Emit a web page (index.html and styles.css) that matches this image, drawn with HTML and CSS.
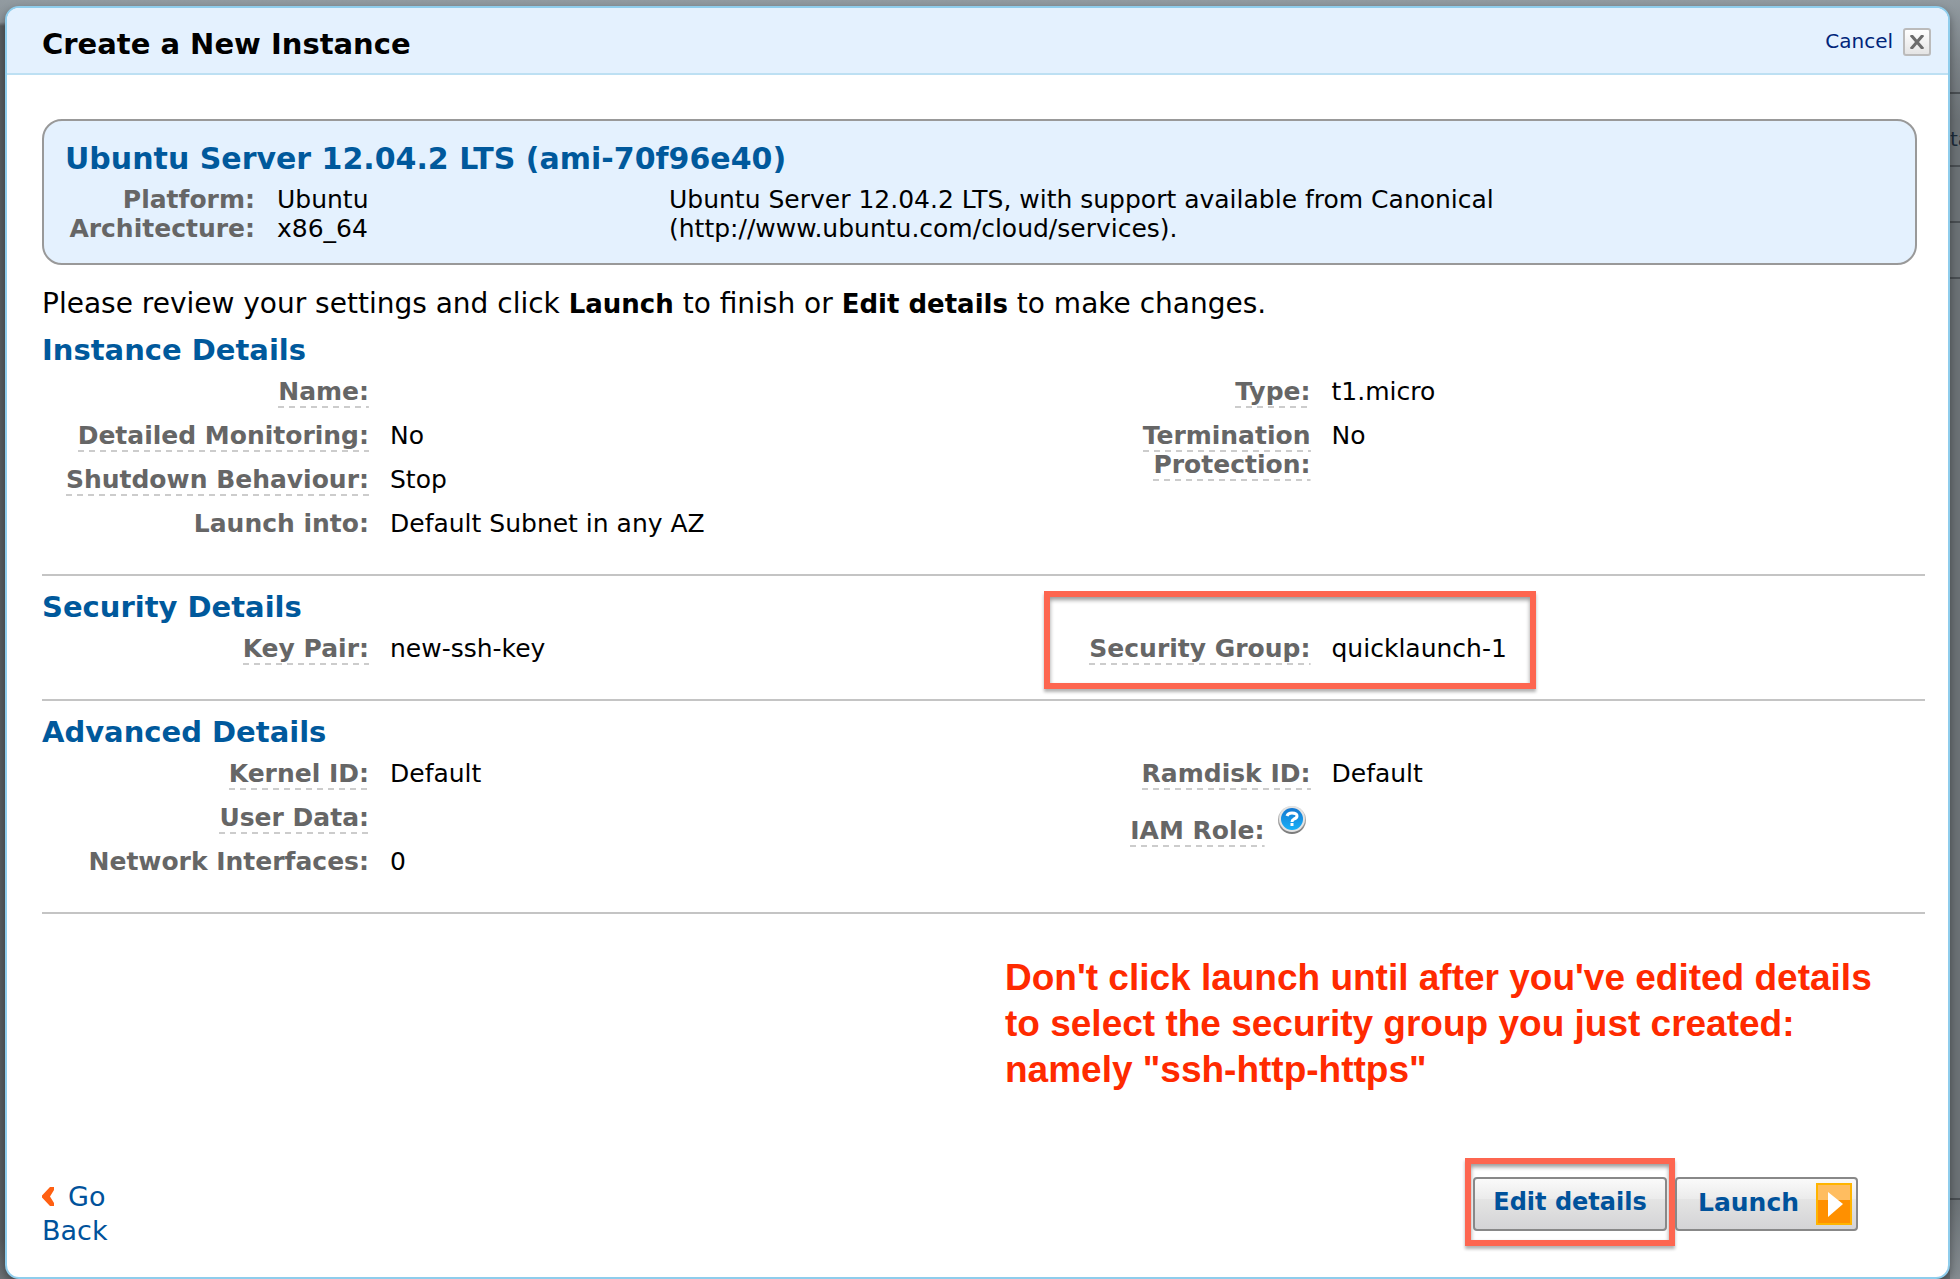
FILE: index.html
```html
<!DOCTYPE html>
<html lang="en">
<head>
<meta charset="utf-8">
<title>Create a New Instance</title>
<link rel="stylesheet" href="styles.css">
</head>
<body>
<span class="page-behind">ta</span>
<main class="dialog">
  <header class="dialog-header">
    <h1 class="dialog-title">Create a New Instance</h1>
    <button class="cancel" type="button">Cancel
      <span class="close-box"><svg width="14" height="14" viewBox="0 0 14 14"><path d="M1 0L13 14M13 0L1 14" stroke="#6b6b6b" stroke-width="3" fill="none"/></svg></span>
    </button>
  </header>
  <div class="dialog-body">
    <section class="ami">
      <h2 class="heading ami-name">Ubuntu Server 12.04.2 LTS (ami-70f96e40)</h2>
      <div class="ami-columns">
        <dl class="ami-facts">
          <dt>Platform:</dt><dd>Ubuntu</dd>
          <dt>Architecture:</dt><dd>x86_64</dd>
        </dl>
        <p class="ami-text">Ubuntu Server 12.04.2 LTS, with support available from Canonical (http://www.ubuntu.com/cloud/services).</p>
      </div>
    </section>
    <p class="intro">Please review your settings and click <b>Launch</b> to finish or <b>Edit details</b> to make changes.</p>

    <section class="group">
      <h2 class="heading">Instance Details</h2>
      <div class="columns">
        <dl class="facts">
          <dt><span class="tip">Name:</span></dt><dd></dd>
          <dt><span class="tip">Detailed Monitoring:</span></dt><dd>No</dd>
          <dt><span class="tip">Shutdown Behaviour:</span></dt><dd>Stop</dd>
          <dt>Launch into:</dt><dd>Default Subnet in any AZ</dd>
        </dl>
        <dl class="facts">
          <dt><span class="tip">Type:</span></dt><dd>t1.micro</dd>
          <dt><span class="tip">Termination Protection:</span></dt><dd>No</dd>
        </dl>
      </div>
    </section>

    <section class="group">
      <h2 class="heading">Security Details</h2>
      <div class="columns">
        <dl class="facts">
          <dt><span class="tip">Key Pair:</span></dt><dd>new-ssh-key</dd>
        </dl>
        <dl class="facts marked">
          <dt><span class="tip">Security Group:</span></dt><dd>quicklaunch-1</dd>
        </dl>
      </div>
    </section>

    <section class="group">
      <h2 class="heading">Advanced Details</h2>
      <div class="columns">
        <dl class="facts">
          <dt><span class="tip">Kernel ID:</span></dt><dd>Default</dd>
          <dt><span class="tip">User Data:</span></dt><dd></dd>
          <dt>Network Interfaces:</dt><dd>0</dd>
        </dl>
        <dl class="facts">
          <dt><span class="tip">Ramdisk ID:</span></dt><dd>Default</dd>
          <dt class="with-help"><span class="tip">IAM Role:</span>
            <svg class="help" width="30" height="30" viewBox="0 0 30 30" role="img" aria-label="Help">
              <defs>
                <linearGradient id="rim" x1="0" y1="0" x2="0" y2="1"><stop offset="0" stop-color="#d8d8d8"/><stop offset="1" stop-color="#777"/></linearGradient>
                <linearGradient id="ball" x1="0" y1="0" x2="0" y2="1"><stop offset="0" stop-color="#1577cf"/><stop offset="1" stop-color="#17b0f8"/></linearGradient>
              </defs>
              <circle cx="15" cy="15" r="14" fill="url(#rim)"/>
              <circle cx="15" cy="14" r="13" fill="#e4e4e4"/>
              <circle cx="15" cy="14" r="11" fill="url(#ball)"/>
              <path d="M10 11Q11 8 15 8Q20 8 20 11Q20 13 17 14Q15 15 15 17M15 18V21" stroke="#fff" stroke-width="3" fill="none"/>
            </svg>
          </dt><dd></dd>
        </dl>
      </div>
    </section>

    <p class="note">Don't click launch until after you've edited details to select the security group you just created: <br>namely "ssh-http-https"</p>

    <footer class="actions">
      <a class="back" href="#"><svg class="chevron" width="12" height="19" viewBox="0 0 12 19"><path d="M8 0H12V3L8 9.500L12 16V19H8L0 10.500V8.500Z" fill="#ff6012"/></svg>Go Back</a>
      <div class="buttons">
        <span class="mark"><button class="button" type="button"><span class="button-text">Edit details</span></button></span>
        <button class="button launch" type="button"><span class="button-text">Launch</span>
          <svg width="36" height="42" viewBox="0 0 36 42"><path d="M0 0H36V42H0Z" fill="#ffb400"/><path d="M2 2H34V17H2Z" fill="#ffbd60"/><path d="M2 17H34V40H2Z" fill="#ff9000"/><path d="M12 9L27 21L12 34Z" fill="#fff"/></svg>
        </button>
      </div>
    </footer>
  </div>
</main>
</body>
</html>
```
FILE: styles.css
```css
*, *::after { box-sizing: border-box; }
body {
  margin: 0;
  min-height: 100vh;
  display: flex;
  position: relative;
  padding: 6px 10px 0 5px;
  background:
    linear-gradient(#4a4f53, #4a4f53) right 92px / 10px 2px no-repeat,
    linear-gradient(#4a4f53, #4a4f53) right 165px / 10px 2px no-repeat,
    linear-gradient(#4a4f53, #4a4f53) right 221px / 10px 2px no-repeat,
    linear-gradient(#4a4f53, #4a4f53) right 277px / 10px 2px no-repeat,
    linear-gradient(#4a4f53, #4a4f53) right 1198px / 10px 2px no-repeat,
    linear-gradient(#929ba1, #7c8388 60px, #6c7276 120px, #6c7276 1200px, #858c91) right / 10px 100% no-repeat,
    linear-gradient(#929ba1, #8a9398 22px, #5a5f62 26px, #5a5f62 1240px, #6c7276);
  font: 25px/29px "DejaVu Sans", Verdana, sans-serif;
  color: #000;
}
h1, h2, p, dl, dd { margin: 0; }
/* Sliver of the page that the dialog covers */
.page-behind {
  position: absolute;
  left: calc(100% - 10px);
  top: 125px;
  width: 10px;
  overflow: hidden;
  font-size: 20px;
  color: #1c2b3a;
}
.dialog {
  position: relative;
  flex: 1;
  display: flex;
  flex-direction: column;
  background: #fff;
  border: 2px solid #8fcdec;
  border-radius: 14px;
  box-shadow: 0 4px 10px rgba(0, 0, 0, .4);
}
.dialog-header {
  display: flex;
  justify-content: space-between;
  align-items: center;
  height: 67px;
  padding: 2px 17px 0 35px;
  background: #e4f1fe;
  border-bottom: 2px solid #bde0f3;
  border-radius: 12px 12px 0 0;
}
.dialog-title { padding-top: 4px; font-size: 29px; line-height: 36px; }
.cancel {
  display: flex;
  align-items: center;
  gap: 10px;
  padding: 0;
  border: 0;
  background: none;
  font: inherit;
  font-size: 20px;
  color: #00257a;
}
.close-box {
  display: flex;
  align-items: center;
  justify-content: center;
  width: 28px;
  height: 28px;
  border: 2px solid #bbb;
  border-radius: 3px;
  background: linear-gradient(#fff, #e4e4e4);
}
.dialog-body {
  flex: 1;
  display: flex;
  flex-direction: column;
  padding: 44px 23px 0 35px;
}
.ami {
  margin-right: 8px;
  padding: 20px 21px;
  background: #e4f1fe;
  border: 2px solid #999;
  border-radius: 20px;
}
.heading { font-size: 29px; line-height: 36px; color: #00599c; }
.ami-name { font-size: 30px; }
.ami-columns { display: flex; padding-top: 8px; }
.ami-facts {
  display: grid;
  grid-template-columns: 190px 1fr;
  column-gap: 22px;
  align-content: start;
  width: 604px;
}
dt { font-weight: bold; color: #666; text-align: right; }
.ami-text { width: 880px; }
.intro { margin-top: 24px; font-size: 28px; }
.intro b { font-size: 26px; }
.group { padding: 13px 0 21px; border-bottom: 2px solid #c4c4c4; }
.columns { display: grid; grid-template-columns: 1fr 1fr; padding-top: 9px; }
.facts {
  display: grid;
  grid-template-columns: 327px 1fr;
  column-gap: 21px;
  align-content: start;
}
.facts dt, .facts dd { margin-bottom: 15px; }
.tip {
  padding-bottom: 2px;
  background: repeating-linear-gradient(90deg, #ccc 0 6px, transparent 6px 11px) bottom / 100% 2px no-repeat;
  -webkit-box-decoration-break: clone;
  box-decoration-break: clone;
}
.marked { position: relative; }
.marked::after {
  content: "";
  position: absolute;
  left: 60px;
  top: -43px;
  width: 492px;
  height: 98px;
  border: 6px solid #fd6650;
  box-shadow: 0 3px 3px rgba(0, 0, 0, .3), inset 0 3px 4px rgba(0, 0, 0, .4);
}
.facts .with-help {
  display: flex;
  justify-content: flex-end;
  align-items: flex-end;
  gap: 12px;
  padding-right: 4px;
  margin-bottom: 0;
}
.help { margin: 2px 0 12px; }
.note {
  align-self: flex-end;
  width: 890px;
  margin-right: 30px;
  padding-top: 41px;
  font: bold 37px/46px "Liberation Sans", Arial, sans-serif;
  color: #ff2a00;
}
.actions {
  flex: 1;
  display: flex;
  justify-content: space-between;
  align-items: flex-end;
  padding: 0 67px 29px 0;
}
.back { width: 80px; font-size: 27px; line-height: 34px; color: #00529b; text-decoration: none; }
.chevron { margin-right: 14px; }
.buttons { display: flex; align-items: flex-end; padding-bottom: 2px; }
.mark {
  display: flex;
  padding: 13px 2px 9px;
  border: 6px solid #fd6650;
  box-shadow: 0 3px 3px rgba(0, 0, 0, .3), inset 0 3px 4px rgba(0, 0, 0, .4);
}
.button {
  display: flex;
  align-items: center;
  justify-content: center;
  width: 194px;
  height: 54px;
  padding: 0;
  border: 2px solid #888;
  border-radius: 4px;
  background: linear-gradient(#fafafa, #ebebeb 40%, #e4e4e4 41%, #d4d4d6);
  font: bold 24px/29px "DejaVu Sans", Verdana, sans-serif;
  color: #00529b;
}
.button-text { padding-bottom: 4px; }
.launch {
  justify-content: flex-end;
  gap: 17px;
  width: 183px;
  margin-bottom: 15px;
  padding-right: 4px;
  font-size: 25px;
}
```
